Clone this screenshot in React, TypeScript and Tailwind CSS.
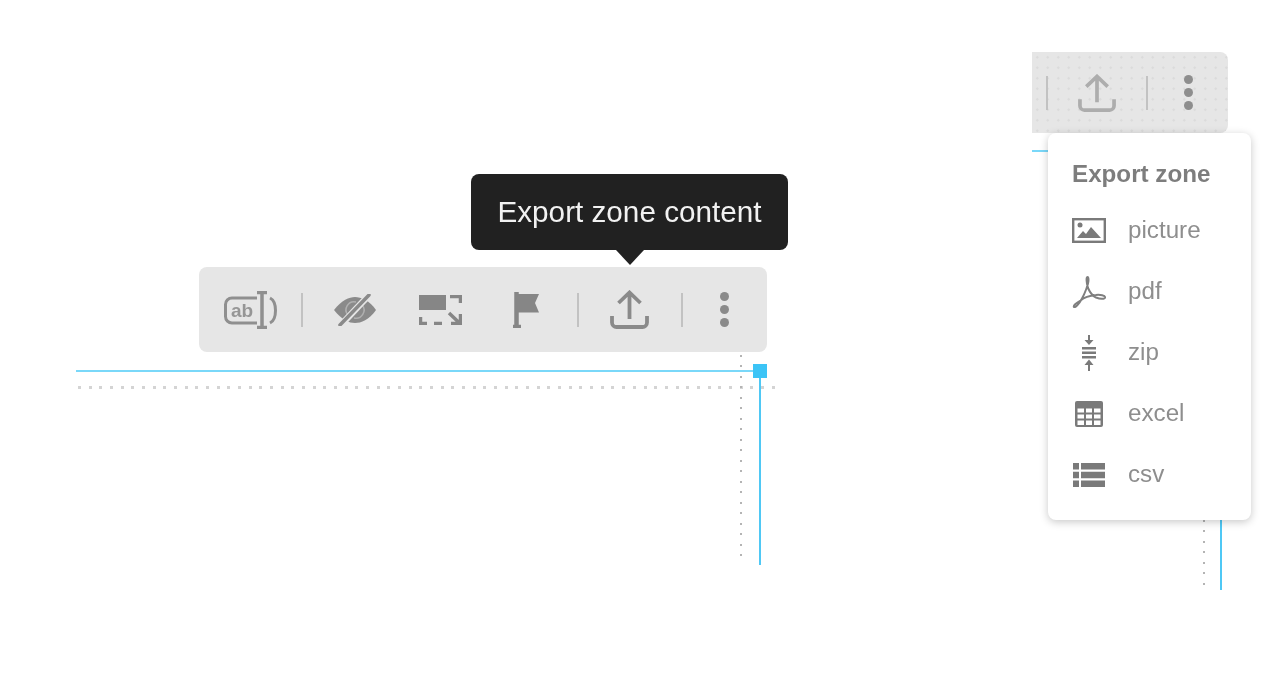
import React from 'react';

const Sep = () => <div className="w-0.5 h-[34px] bg-[#c2c2c2] shrink-0" />;

const AbIcon = () => (
  <svg width="53" height="38" viewBox="0 0 53 38" fill="none" stroke="#8f8f8f" className="shrink-0">
    <path d="M33 7H8a6.500 6.500 0 0 0-6.500 6.500v12A6.500 6.500 0 0 0 8 32h25" strokeWidth="3" />
    <text x="7" y="26" fontFamily="'Liberation Sans', sans-serif" fontWeight="700" fontSize="19" fill="#969696" stroke="none">ab</text>
    <path d="M33 1.500h10M33 36.500h10M38 1.500v35" strokeWidth="3.500" />
    <path d="M46 7c4 2 5.500 7 5.500 12.500S50 30 46 32" strokeWidth="3" />
  </svg>
);

const EyeIcon = () => (
  <svg width="42" height="32" viewBox="0 0 42 32" fill="none" className="shrink-0">
    <path d="M0 16C8 6 15 3 21 3s14 3 21 13c-7 10-15 13-21 13S8 26 0 16Z" fill="#8a8a8a" />
    <path d="M14 21a8 8 0 0 1 8-13" stroke="#b0b0b0" strokeWidth="1.500" />
    <path d="M28 11a8 8 0 0 1-8 13" stroke="#b0b0b0" strokeWidth="1.500" />
    <path d="M6 32 36 0" stroke="#e6e6e6" strokeWidth="6.500" />
    <path d="M6 31 35 1" stroke="#8a8a8a" strokeWidth="3.500" strokeLinecap="round" />
  </svg>
);

const AspectIcon = () => (
  <svg width="43" height="30" viewBox="0 0 43 30" fill="none" className="shrink-0">
    <path d="M0 0h27v15H0Z" fill="#868686" />
    <path d="M31 1.500h10.500V8M1.500 22v6.500H8M15 28.500h8" stroke="#868686" strokeWidth="3.500" />
    <path d="M30 18 41 28.500M41.500 19v9.500H32" stroke="#868686" strokeWidth="3.500" />
  </svg>
);

const FlagIcon = () => (
  <svg width="26" height="36" viewBox="0 0 26 36" fill="none" className="shrink-0">
    <path d="M3 2h23l-4 9 4 9.500H3Z" fill="#868686" />
    <path d="M3.500 0v33" stroke="#868686" strokeWidth="4.500" />
    <path d="M0 34.500h8" stroke="#868686" strokeWidth="3.500" />
  </svg>
);

const UploadIcon = ({ color, size }: { color: string; size: number }) => (
  <svg width={size} height={size} viewBox="0 0 39 39" fill="none" stroke={color} className="shrink-0">
    <path d="M19.500 29V3M8.500 13 19.500 2.500 30.500 13" strokeWidth="3.800" />
    <path d="M2 26v6.500a4.500 4.500 0 0 0 4.500 4.500h26a4.500 4.500 0 0 0 4.500-4.500V26" strokeWidth="3.800" />
  </svg>
);

const DotsIcon = ({ color }: { color: string }) => (
  <svg width="9" height="35" viewBox="0 0 9 35" fill={color} className="shrink-0">
    <circle cx="4.500" cy="4.500" r="4.500" />
    <circle cx="4.500" cy="17.500" r="4.500" />
    <circle cx="4.500" cy="30.500" r="4.500" />
  </svg>
);

const PictureIcon = () => (
  <svg width="34" height="25" viewBox="0 0 34 25" fill="none">
    <rect x="1.200" y="1.200" width="31.600" height="22.600" stroke="#7a7a7a" strokeWidth="2.400" />
    <circle cx="8" cy="7" r="2.500" fill="#7a7a7a" />
    <path d="M5 20 11 13l3 3 5-7 10 11Z" fill="#7a7a7a" />
  </svg>
);

const PdfIcon = () => (
  <svg width="34" height="32" viewBox="0 0 34 32" fill="none" stroke="#7f7f7f" strokeWidth="2" strokeLinejoin="round">
    <path d="M15.500 1c-1.500 0-1 6 .5 11 2 4.500 4.500 8 8 9.500 4 1.500 8.500 2 9 0 .400-2-5-3-9-2.500-5 .5-12 2.500-15.500 5.500C4 27 1 30 2 31c1.500 1 5-3 8-8.500 2.500-4.500 6.500-14 6.500-18.500 0-2-.300-3-1-3Z" />
  </svg>
);

const ZipIcon = () => (
  <svg width="16" height="36" viewBox="0 0 16 36" fill="#7a7a7a">
    <path d="M7 0h2v5h3.500L8 10 3.500 5H7Z" />
    <path d="M1 12h14v2.500H1ZM1 16.500h14V19H1ZM1 21h14v2.500H1Z" />
    <path d="M7 36h2v-6h3.500L8 24.500 3.500 30H7Z" />
  </svg>
);

const ExcelIcon = () => (
  <svg width="28" height="26" viewBox="0 0 28 26">
    <rect width="28" height="26" rx="2" fill="#7a7a7a" />
    <path d="M2.500 7.500h6.500v4H2.500ZM11 7.500h6v4h-6ZM19 7.500h6.500v4H19ZM2.500 13.500h6.500v4H2.500ZM11 13.500h6v4h-6ZM19 13.500h6.500v4H19ZM2.500 19.500h6.500v4.500H2.500ZM11 19.500h6V24h-6ZM19 19.500h6.500V24H19Z" fill="#fff" />
  </svg>
);

const CsvIcon = () => (
  <svg width="32" height="24" viewBox="0 0 32 24" fill="#7a7a7a">
    <path d="M0 0h6v6.500H0ZM8 0h24v6.500H8ZM0 8.750h6v6.500H0ZM8 8.750h24v6.500H8ZM0 17.500h6V24H0ZM8 17.500h24V24H8Z" />
  </svg>
);

const MENU_ITEMS = [
  { label: 'picture', icon: <PictureIcon /> },
  { label: 'pdf', icon: <PdfIcon /> },
  { label: 'zip', icon: <ZipIcon /> },
  { label: 'excel', icon: <ExcelIcon /> },
  { label: 'csv', icon: <CsvIcon /> },
];

export default function App() {
  return (
    <div className="flex h-[688px] w-[1286px] overflow-hidden bg-white font-['Liberation_Sans',Arial,sans-serif] blur-[0.7px]">
      {/* Left: zone toolbar with tooltip */}
      <div className="w-[956px] ml-[76px] pt-[174px] shrink-0">
        <div className="relative ml-[395px] w-[317px] h-[76px] rounded-lg bg-[#212121] flex items-center justify-center text-[29.7px] text-[#f2f2f2]">
          Export zone content
          <div className="absolute left-[145px] top-full w-0 h-0 border-x-[14px] border-x-transparent border-t-[15px] border-t-[#212121]" />
        </div>

        <div className="mt-[17px] ml-[123px] w-[568px] h-[85px] rounded-lg bg-[#e6e6e6] flex items-center pl-[25px]">
          <AbIcon />
          <div className="ml-[24px]"><Sep /></div>
          <div className="ml-[31px]"><EyeIcon /></div>
          <div className="ml-[43px]"><AspectIcon /></div>
          <div className="ml-[51px]"><FlagIcon /></div>
          <div className="ml-[38px]"><Sep /></div>
          <div className="ml-[31px]"><UploadIcon color="#8a8a8a" size={39} /></div>
          <div className="ml-[32px]"><Sep /></div>
          <div className="ml-[37px]"><DotsIcon color="#8a8a8a" /></div>
        </div>

        {/* Zone outline */}
        <div className="relative h-[213px] w-[700px]">
          <div className="absolute left-0 top-[18px] w-[684px] h-0.5 bg-[#7ad8f9]" />
          <div className="absolute left-[2px] top-[34px] w-[697px] h-[3px] bg-[repeating-linear-gradient(90deg,#d4d4d4_0,#d4d4d4_3px,transparent_3px,transparent_10.67px)]" />
          <div className="absolute left-[664px] top-[3px] w-0.5 h-[210px] bg-[repeating-linear-gradient(180deg,#b4b4b4_0,#b4b4b4_2px,transparent_2px,transparent_10.500px)]" />
          <div className="absolute left-[683px] top-[18px] w-0.5 h-[195px] bg-[#4fc8f5]" />
          <div className="absolute left-[677px] top-[12px] w-3.5 h-3.5 bg-[#3cc4f6]" />
        </div>
      </div>

      {/* Right: zone toolbar with open export menu */}
      <div className="relative w-[219px] pt-[52px] shrink-0">
        <div className="absolute left-0 top-[150px] w-4 h-0.5 bg-[#7ad8f9]" />
        <div className="absolute left-[171px] top-[520px] w-0.5 h-[70px] bg-[repeating-linear-gradient(180deg,#b4b4b4_0,#b4b4b4_2px,transparent_2px,transparent_10.500px)]" />
        <div className="absolute left-[188px] top-[520px] w-0.5 h-[70px] bg-[#4fc8f5]" />

        <div className="w-[196px] h-[81px] rounded-r-lg bg-[#e6e6e6] bg-[radial-gradient(#dadada_1px,transparent_1px)] bg-[length:10.5px_10.5px] flex items-center pl-[14px]">
          <Sep />
          <div className="ml-[30px]"><UploadIcon color="#adadad" size={38} /></div>
          <div className="ml-[30px]"><Sep /></div>
          <div className="ml-[36px]"><DotsIcon color="#8e8e8e" /></div>
        </div>

        <div className="relative ml-4 w-[203px] h-[387px] rounded-lg bg-white shadow-[0_2px_9px_rgba(0,0,0,0.22)] pt-[26px] pl-6">
          <div className="h-[30px] leading-[30px] text-[24.2px] font-bold text-[#7d7d7d]">Export zone</div>
          <div className="mt-[11px] flex flex-col">
            {MENU_ITEMS.map(item => (
              <div key={item.label} className="h-[61px] flex items-center">
                <div className="w-[34px] flex justify-center shrink-0">{item.icon}</div>
                <span className="ml-[22px] text-[24.2px] text-[#8e8e8e]">{item.label}</span>
              </div>
            ))}
          </div>
        </div>
      </div>
    </div>
  );
}
